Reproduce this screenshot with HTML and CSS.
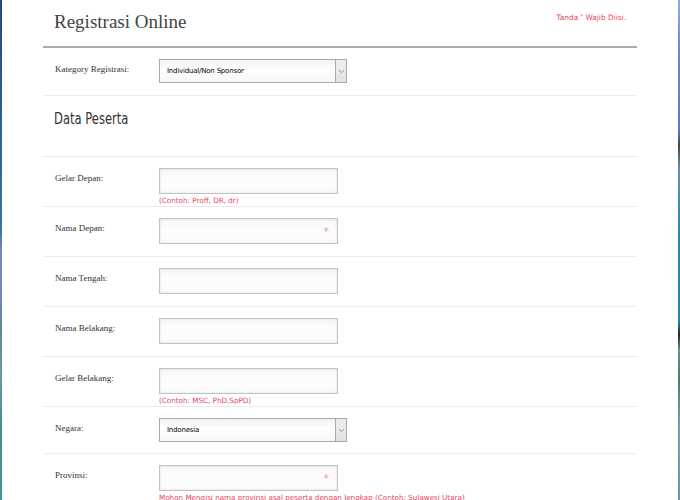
FILE: index.html
```html
<!DOCTYPE html>
<html lang="id">
<head>
<meta charset="utf-8">
<title>Registrasi Online</title>
<link rel="stylesheet" href="styles.css">
</head>
<body>
<div class="strip strip-left"></div>
<main class="page">
  <div class="wrap">
    <header class="head">
      <h1 class="title">Registrasi Online</h1>
      <p class="required-note">Tanda <sup>*</sup> Wajib Diisi.</p>
    </header>

    <div class="row row-sel row-first">
      <label class="lbl">Kategory Registrasi:</label>
      <div class="field">
        <div class="select"><span class="select-val">Individual/Non Sponsor</span><span class="select-arrow"><svg width="7" height="5" viewBox="0 0 7 5"><path d="M1 1.2 L3.5 3.6 L6 1.2" fill="none" stroke="#999" stroke-width="1"/></svg></span></div>
      </div>
    </div>

    <div class="section">
      <h2 class="section-title">Data Peserta</h2>
    </div>

    <div class="row">
      <label class="lbl">Gelar Depan:</label>
      <div class="field">
        <div class="input"></div>
        <p class="hint">(Contoh: Proff, DR, dr)</p>
      </div>
    </div>

    <div class="row">
      <label class="lbl">Nama Depan:</label>
      <div class="field">
        <div class="input"><span class="star">*</span></div>
      </div>
    </div>

    <div class="row">
      <label class="lbl">Nama Tengah:</label>
      <div class="field">
        <div class="input"></div>
      </div>
    </div>

    <div class="row">
      <label class="lbl">Nama Belakang:</label>
      <div class="field">
        <div class="input"></div>
      </div>
    </div>

    <div class="row">
      <label class="lbl">Gelar Belakang:</label>
      <div class="field">
        <div class="input"></div>
        <p class="hint">(Contoh: MSC, PhD,SpPD)</p>
      </div>
    </div>

    <div class="row row-sel">
      <label class="lbl">Negara:</label>
      <div class="field">
        <div class="select"><span class="select-val">Indonesia</span><span class="select-arrow"><svg width="7" height="5" viewBox="0 0 7 5"><path d="M1 1.2 L3.5 3.6 L6 1.2" fill="none" stroke="#999" stroke-width="1"/></svg></span></div>
      </div>
    </div>

    <div class="row">
      <label class="lbl">Provinsi:</label>
      <div class="field">
        <div class="input"><span class="star">*</span></div>
        <p class="hint">Mohon Mengisi nama provinsi asal peserta dengan lengkap (Contoh: Sulawesi Utara)</p>
      </div>
    </div>
  </div>
</main>
<div class="strip strip-right"></div>
</body>
</html>
```

FILE: styles.css
```css
html, body {
  margin: 0;
  padding: 0;
  height: 100%;
  overflow: hidden;
}

body {
  display: flex;
  background: #fff;
}

.strip {
  width: 2px;
  flex: none;
  height: 500px;
}

.strip-left {
  background: linear-gradient(to bottom,
    #24468a 0%, #2c5a9c 20%, #3a70b2 46%, #7a86bc 50%, #7088b8 60%,
    #5a8a9c 66%, #6a9aa8 75%, #4a8a98 85%, #3a98a0 100%);
}

.strip-right {
  width: 2px;
  background: linear-gradient(to bottom,
    #98a8d8 0%, #7088c8 10%, #6078c0 26%, #404840 29%, #7090a0 34%,
    #1a90a8 46%, #1890a0 64%, #2a2418 67%, #6a9090 70%, #4a7a70 76%,
    #7aa0a8 85%, #6a98a0 100%);
}

.page {
  flex: 1;
  background: #fff;
  height: 500px;
}

.wrap {
  margin-left: 41px;
  width: 594px;
}

.head {
  height: 46px;
  border-bottom: 2px solid #ababab;
  display: flex;
  justify-content: space-between;
  align-items: flex-start;
  box-sizing: content-box;
}

.title {
  margin: 10px 0 0 11px;
  font-family: "Liberation Serif", serif;
  font-weight: normal;
  font-size: 19px;
  line-height: 24px;
  color: #444;
}

.required-note {
  margin: 13px 11px 0 0;
  font-family: "DejaVu Sans", sans-serif;
  font-size: 7.4px;
  line-height: 10px;
  color: #e5445f;
}

.required-note sup {
  font-size: 5px;
  vertical-align: 2px;
  line-height: 0;
}

.row {
  display: flex;
  align-items: flex-start;
  height: 50px;
  box-sizing: border-box;
  padding-top: 11px;
  border-bottom: 1px solid #ececec;
}

.row-sel {
  height: 47px;
}

.row-first {
  height: 48px;
}

.lbl {
  width: 104px;
  padding-left: 12px;
  padding-top: 4px;
  font-family: "Liberation Serif", serif;
  font-size: 9px;
  line-height: 12px;
  color: #333;
  flex: none;
}

.field {
  display: flex;
  flex-direction: column;
}

.input {
  position: relative;
  width: 179px;
  height: 26px;
  box-sizing: border-box;
  border: 1px solid #c2c2c2;
  background: linear-gradient(to bottom, #f6f6f6, #fdfdfd 40%, #fbfbfb);
  box-shadow: inset 0 0 3px rgba(0, 0, 0, 0.10);
}

.star {
  position: absolute;
  right: 8px;
  top: 7px;
  font-family: "DejaVu Sans", sans-serif;
  font-size: 11px;
  line-height: 12px;
  color: #f09aa6;
}

.hint {
  margin: 2px 0 0 0;
  font-family: "DejaVu Sans", sans-serif;
  font-size: 7.2px;
  line-height: 10px;
  color: #e5445f;
  white-space: nowrap;
}

.select {
  display: flex;
  width: 188px;
  height: 24px;
  box-sizing: border-box;
  border: 1px solid #a9a9a9;
  background: linear-gradient(to bottom, #f2f2f2, #ffffff 45%, #f6f6f6);
}

.select-val {
  flex: 1;
  padding-left: 7px;
  font-family: "DejaVu Sans", sans-serif;
  font-size: 7px;
  line-height: 22px;
  color: #000;
  letter-spacing: -0.2px;
}

.select-arrow {
  width: 10px;
  flex: none;
  border-left: 1px solid #a9a9a9;
  background: linear-gradient(to bottom, #eeeeee, #e2e2e2);
  display: flex;
  align-items: center;
  justify-content: center;
}

.section {
  height: 61px;
  box-sizing: border-box;
  padding: 13px 0 0 11px;
  border-bottom: 1px solid #ececec;
}

.section-title {
  margin: 0;
  display: inline-block;
  transform: scaleX(0.77);
  transform-origin: left center;
  font-family: "DejaVu Sans", sans-serif;
  font-weight: normal;
  font-size: 15px;
  line-height: 20px;
  color: #333;
}
```
